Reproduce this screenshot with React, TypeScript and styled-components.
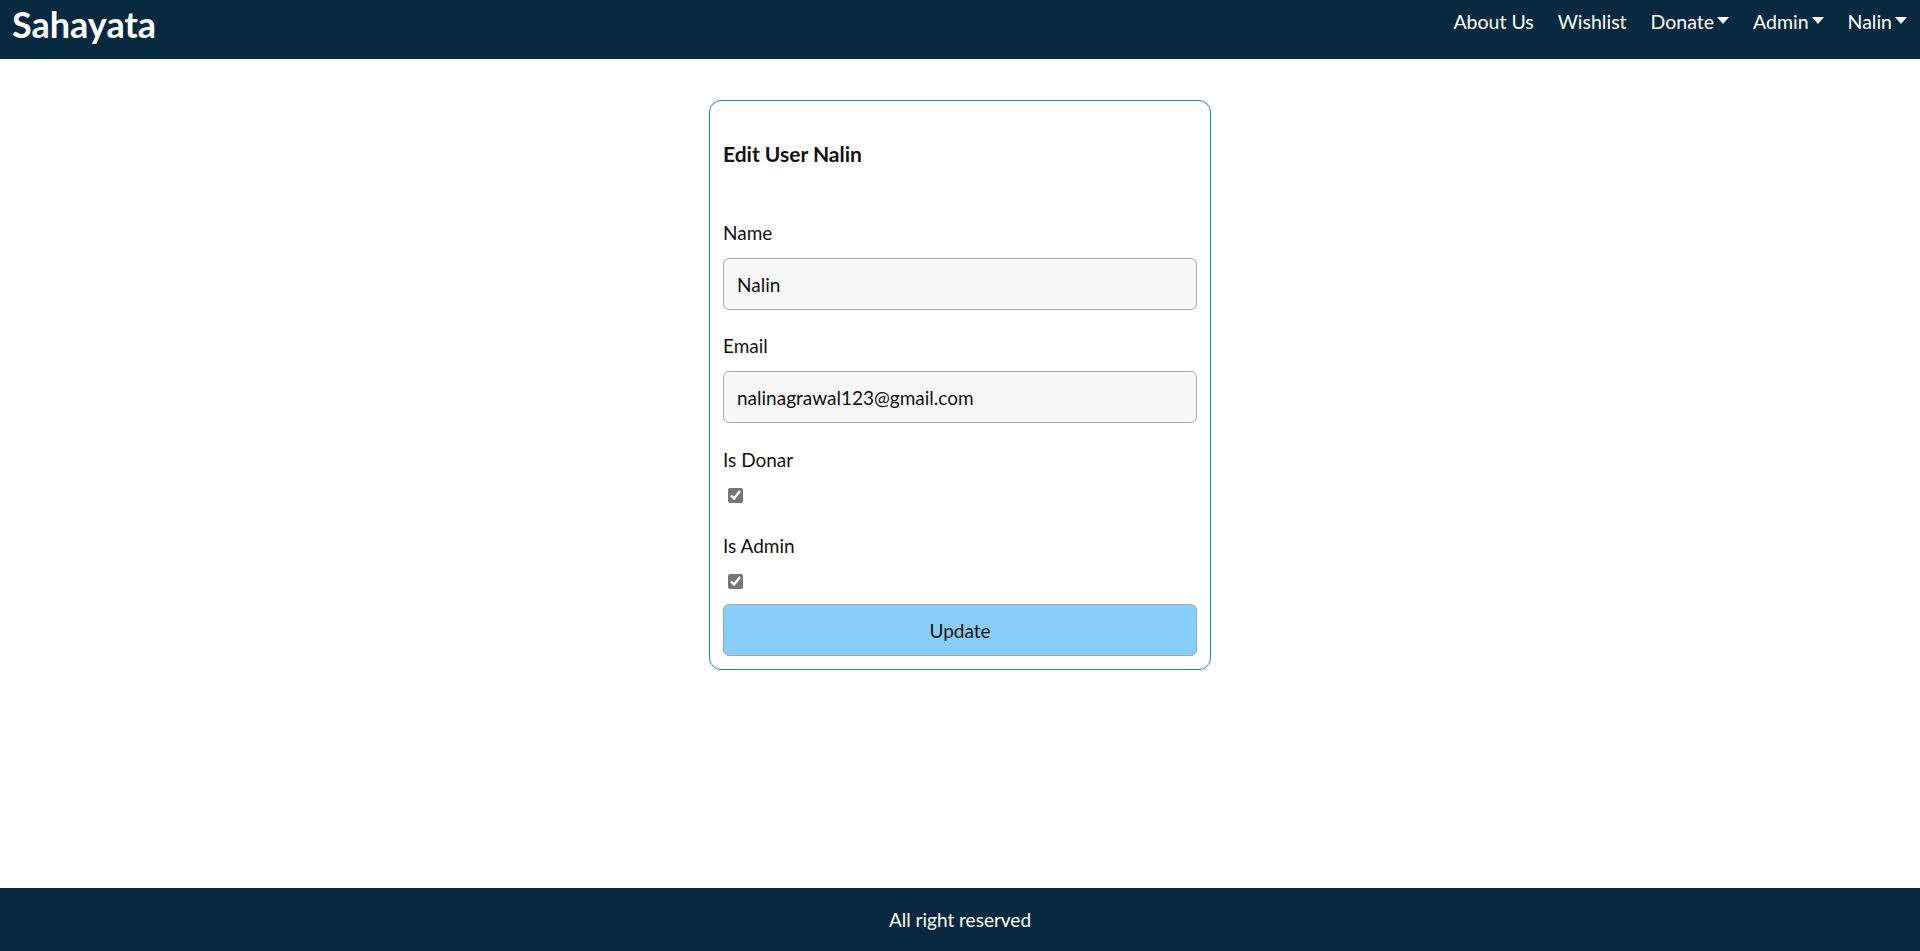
import React from 'react'
import styled, { createGlobalStyle } from 'styled-components'

const GlobalStyle = createGlobalStyle`
  html, body {
    margin: 0;
    padding: 0;
    background: #fff;
    font-family: Lato, 'Open Sans', sans-serif;
  }
  * {
    box-sizing: border-box;
  }
`

const Page = styled.div`
  min-height: 100vh;
  display: flex;
  flex-direction: column;
`

const Header = styled.header`
  height: 59px;
  background-color: #07293f;
  display: flex;
  align-items: flex-start;
  justify-content: space-between;
  padding: 0 13px 0 12px;
`

const Brand = styled.a`
  color: #fff;
  font-size: 36px;
  line-height: 48px;
  font-weight: 700;
  text-decoration: none;
`

const Nav = styled.nav`
  display: flex;
  align-items: center;
  gap: 24px;
  padding-top: 10px;
`

const NavItem = styled.a`
  display: flex;
  align-items: center;
  gap: 3px;
  color: #fff;
  font-size: 19.5px;
  line-height: 24px;
  text-decoration: none;
  cursor: pointer;
`

const Caret = styled.span`
  display: inline-block;
  width: 0;
  height: 0;
  border-left: 6px solid transparent;
  border-right: 6px solid transparent;
  border-top: 7px solid #fff;
  margin-top: -3px;
`

const Main = styled.main`
  flex: 1;
  display: flex;
  justify-content: center;
  align-items: flex-start;
  padding: 41px 0 80px;
`

const Card = styled.div`
  width: 502px;
  border: 1px solid #1b8ea6;
  border-radius: 12px;
  padding: 13px;
`

const Title = styled.h3`
  margin: 28px 0 56px;
  font-size: 21px;
  font-weight: 700;
  line-height: 24px;
  color: #111;
`

const Label = styled.label`
  display: block;
  font-size: 19px;
  line-height: 22px;
  color: #111;
`

const Field = styled.div`
  margin-bottom: 25px;
`

const Input = styled.input`
  display: block;
  width: 100%;
  height: 52px;
  margin-top: 14px;
  padding: 0 13px;
  font-family: inherit;
  font-size: 19px;
  color: #111;
  background-color: #f7f7f7;
  border: 1px solid #a6a6a6;
  border-radius: 6px;
  outline: none;
`

const CheckField = styled.div<{ $last?: boolean }>`
  padding-top: 1px;
  margin-bottom: ${p => (p.$last ? '15px' : '31px')};
`

const Check = styled.input`
  display: block;
  width: 15px;
  height: 15px;
  margin: 17px 0 0 5px;
  accent-color: #767676;
`

const Button = styled.button`
  display: block;
  width: 100%;
  height: 52px;
  font-family: inherit;
  font-size: 19px;
  color: #111;
  background-color: #87cefa;
  border: 1px solid #a6a6a6;
  border-radius: 6px;
  cursor: pointer;
`

const Footer = styled.footer`
  height: 63px;
  background-color: #07293f;
  color: #fff;
  display: flex;
  align-items: center;
  justify-content: center;
  font-size: 19px;
`

const navLinks = [
  { label: 'About Us' },
  { label: 'Wishlist' },
  { label: 'Donate', menu: true },
  { label: 'Admin', menu: true },
  { label: 'Nalin', menu: true },
]

export default function App() {
  return (
    <Page>
      <GlobalStyle />
      <Header>
        <Brand href="#">Sahayata</Brand>
        <Nav>
          {navLinks.map(link => (
            <NavItem key={link.label}>
              {link.label}
              {link.menu && <Caret />}
            </NavItem>
          ))}
        </Nav>
      </Header>
      <Main>
        <Card>
          <Title>Edit User Nalin</Title>
          <Field>
            <Label htmlFor="name">Name</Label>
            <Input id="name" type="text" defaultValue="Nalin" />
          </Field>
          <Field>
            <Label htmlFor="email">Email</Label>
            <Input id="email" type="email" defaultValue="nalinagrawal123@gmail.com" />
          </Field>
          <CheckField>
            <Label htmlFor="donar">Is Donar</Label>
            <Check id="donar" type="checkbox" defaultChecked />
          </CheckField>
          <CheckField $last>
            <Label htmlFor="admin">Is Admin</Label>
            <Check id="admin" type="checkbox" defaultChecked />
          </CheckField>
          <Button type="button">Update</Button>
        </Card>
      </Main>
      <Footer>All right reserved</Footer>
    </Page>
  )
}
